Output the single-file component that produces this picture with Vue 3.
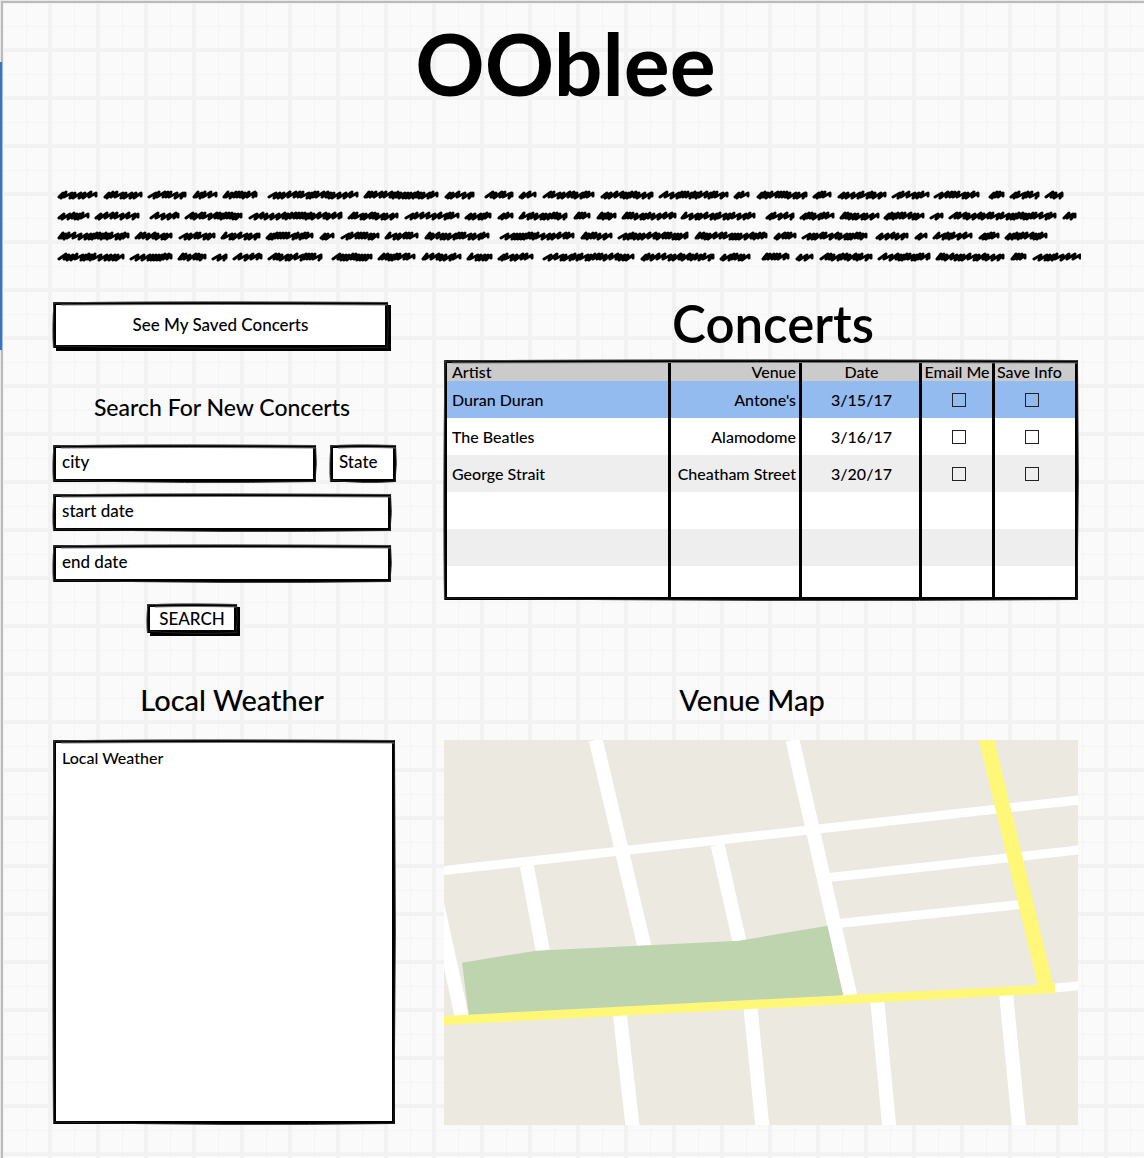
<script setup>
import { h, ref } from 'vue'

// Hand-drawn outline: thin bowed strokes laid over a plain border.
const Sketch = ({ width, height }) => {
  const x = 100 / width
  const y = 100 / height
  const line = (d, stroke, w) =>
    h('path', { d, stroke, 'stroke-width': w, fill: 'none', 'vector-effect': 'non-scaling-stroke' })
  return h('svg', { class: 'sketch', viewBox: '0 0 100 100', preserveAspectRatio: 'none', 'aria-hidden': 'true' }, [
    line(`M0 ${y} Q30 ${-y} 100 ${y / 2}`, '#444', 1),
    line(`M${8 * x} ${3 * y} Q50 ${2 * y} 100 ${3 * y}`, '#777', 1),
    line(`M0 ${100 - 2 * y} Q50 ${100 + 2 * y} 100 ${100 - y / 2}`, '#222', 1),
    line(`M${x} 0 Q${-x} 60 ${x / 2} 100`, '#444', 1),
    line(`M${100 - x / 2} 0 Q${100 + 1.4 * x} 50 ${100 - x} 100`, '#222', 1),
  ])
}
Sketch.props = ['width', 'height']

const scribbles = [
  { y: 8, words: '57-97 103-142 147-186 192-217 222-257 267-358 363-438 444-474 484-513 518-536 542-594 600-653 658-728 733-749 756-807 812-831 837-886 891-929 933-979 988-1004 1009-1039 1044-1063' },
  { y: 29, words: '57-89 94-139 149-179 184-242 248-342 347-398 404-459 464-491 497-513 518-567 573-590 596-616 621-676 680-755 765-794 799-834 839-879 883-924 929-943 948-1056 1062-1076' },
  { y: 49, words: '57-129 134-172 178-215 220-260 265-313 319-334 340-379 384-418 424-489 499-574 580-612 617-688 694-767 773-796 801-867 875-908 914-927 932-972 978-999 1004-1047' },
  { y: 70, words: '57-124 129-172 177-206 211-227 232-262 267-322 331-372 377-415 421-461 466-492 497-533 542-634 640-714 719-750 761-789 795-813 819-872 877-930 935-1004 1010-1026 1032-1081' },
]

let seed = 7
const random = () => (seed = (seed * 16807) % 2147483647) / 2147483647
function scribbleWord(word, y) {
  const [from, to] = word.split('-').map((n) => Number(n) - 57)
  let x = from + 2
  let d = `M${x} ${y + 2}`
  while (x < to - 7) {
    const pick = random()
    const step = pick < 0.5 ? 3 : pick < 0.7 ? 4 : 6
    const top = random() < 0.5 ? 3 : 2
    d += `L${x + step + 1} ${y - top}L${x + step - 1} ${y + 5 - top}`
    x += step
  }
  return d + `L${to - 1} ${y - 2}L${to - 1} ${y + 1}`
}
const scribblePath = scribbles.map((l) => l.words.split(' ').map((w) => scribbleWord(w, l.y)).join('')).join('')

const concerts = ref([
  { artist: 'Duran Duran', venue: "Antone's", date: '3/15/17', email: false, save: false },
  { artist: 'The Beatles', venue: 'Alamodome', date: '3/16/17', email: false, save: false },
  { artist: 'George Strait', venue: 'Cheatham Street', date: '3/20/17', email: false, save: false },
])
const city = ref('')
const state = ref('')
const startDate = ref('')
const endDate = ref('')

const streets = [
  'M-10 150L18 278', 'M83 126L99 211', 'M152 0L201 208', 'M274 105L296 202', 'M349 0L407 256',
  'M176 274L189 388', 'M307 268L319 388', 'M434 262L446 388', 'M563 254L576 388',
]
const lanes = ['M-2 131L637 60', 'M384 138L637 110', 'M392 184L576 165', 'M606 249L637 246']
</script>

<template>
  <div class="app">
    <div class="marker"></div>
    <div class="page">
      <header>
        <h1>OOblee</h1>
        <svg class="scribble" viewBox="0 0 1024 78" role="img" aria-label="Introduction text">
          <path :d="scribblePath" />
        </svg>
      </header>

      <main>
        <section class="finder">
          <div class="frame raised">
            <button class="saved" type="button">See My Saved Concerts</button>
            <Sketch :width="336" :height="46" />
          </div>
          <form @submit.prevent>
            <h2 class="small">Search For New Concerts</h2>
            <div class="place">
              <div class="frame city">
                <input v-model="city" type="text" placeholder="city" aria-label="city" />
                <Sketch :width="264" :height="37" />
              </div>
              <div class="frame state">
                <input v-model="state" type="text" placeholder="State" aria-label="State" />
                <Sketch :width="66" :height="37" />
              </div>
            </div>
            <div class="frame date">
              <input v-model="startDate" type="text" placeholder="start date" aria-label="start date" />
              <Sketch :width="338" :height="37" />
            </div>
            <div class="frame date">
              <input v-model="endDate" type="text" placeholder="end date" aria-label="end date" />
              <Sketch :width="338" :height="37" />
            </div>
            <div class="frame raised search">
              <button type="submit">SEARCH</button>
              <Sketch :width="90" :height="29" />
            </div>
          </form>
        </section>

        <section class="concerts">
          <h2 class="large">Concerts</h2>
          <div class="frame">
            <table>
              <colgroup>
                <col class="c-artist" /><col class="c-venue" /><col class="c-date" /><col class="c-email" /><col class="c-save" />
              </colgroup>
              <thead>
                <tr>
                  <th>Artist</th>
                  <th class="right">Venue</th>
                  <th class="center">Date</th>
                  <th class="center tight">Email Me</th>
                  <th class="tight">Save Info</th>
                </tr>
              </thead>
              <tbody>
                <tr v-for="(c, i) in concerts" :key="c.artist" :class="{ selected: i === 0 }">
                  <td>{{ c.artist }}</td>
                  <td class="right">{{ c.venue }}</td>
                  <td class="center">{{ c.date }}</td>
                  <td class="tick"><input v-model="c.email" type="checkbox" :aria-label="'Email me about ' + c.artist" /></td>
                  <td class="tick"><input v-model="c.save" type="checkbox" :aria-label="'Save info for ' + c.artist" /></td>
                </tr>
                <tr v-for="n in 3" :key="n" class="blank"><td v-for="k in 5" :key="k"></td></tr>
              </tbody>
            </table>
            <Sketch :width="633" :height="240" />
          </div>
        </section>

        <section class="weather">
          <h2>Local Weather</h2>
          <div class="frame">
            <textarea placeholder="Local Weather" aria-label="Local Weather"></textarea>
            <Sketch :width="342" :height="384" />
          </div>
        </section>

        <section class="venue">
          <h2>Venue Map</h2>
          <svg class="map" viewBox="0 0 635 386" role="img" aria-label="Venue map">
            <rect width="635" height="386" fill="#ece9e1" />
            <g fill="none" stroke="#fff">
              <path v-for="d in streets" :key="d" :d="d" stroke-width="14" />
              <path v-for="d in lanes" :key="d" :d="d" stroke-width="9" />
            </g>
            <path d="M18 223L92 211L296 201L384 186L400 256L25 277Z" fill="#bdd4ae" />
            <g fill="none" stroke="#fff777">
              <path d="M543 -2L604 252" stroke-width="15" />
              <path d="M-2 281L612 249" stroke-width="9" />
            </g>
          </svg>
        </section>
      </main>
    </div>
  </div>
</template>

<style>
body {
  margin: 0;
}
</style>

<style scoped>
.app {
  position: relative;
  padding: 1px 0 0 1px;
  background: #e8e8e8;
  color: #000;
  font-family: Lato, "Open Sans", sans-serif;
  font-size: 16px;
  font-weight: 500;
  line-height: 20px;
}
.marker {
  position: absolute;
  top: 62px;
  left: 0;
  width: 2px;
  height: 288px;
  background: #2a78c8;
}
.page {
  box-sizing: border-box;
  min-height: calc(100vh - 1px);
  padding: 20px 66px 31px 50px;
  border-top: 2px solid #bbb;
  border-left: 2px solid #bbb;
  background-color: #fafafa;
  background-image:
    linear-gradient(90deg, #f2f2f2 4px, transparent 4px),
    linear-gradient(#f2f2f2 4px, transparent 4px),
    linear-gradient(90deg, transparent 26px, #f4f4f4 26px, #f4f4f4 27px, transparent 27px),
    linear-gradient(transparent 26px, #f4f4f4 26px, #f4f4f4 27px, transparent 27px);
  background-size: 48px 48px;
  background-origin: border-box;
  background-position: -1px -1px;
}
h1,
h2 {
  margin: 0;
  text-align: center;
}
h1 {
  font-size: 86px;
  font-weight: 700;
  line-height: 80px;
}
h2 {
  font-size: 29px;
  font-weight: 500;
  line-height: 36px;
  margin-bottom: 22px;
}
h2.small {
  font-size: 23px;
  line-height: 28px;
  margin-bottom: 24px;
}
h2.large {
  font-size: 51px;
  font-weight: 600;
  line-height: 56px;
  margin-bottom: 8px;
  padding-left: 24px;
}
.scribble {
  display: block;
  box-sizing: border-box;
  width: calc(100% + 3px);
  margin-top: 84px;
  padding: 0 0 0 4px;
}
.scribble path {
  fill: none;
  stroke: #000;
  stroke-width: 3;
  stroke-linecap: round;
  stroke-linejoin: round;
}
main {
  display: grid;
  grid-template-columns: 342fr 634fr;
  column-gap: 49px;
  row-gap: 49px;
  margin-top: 31px;
}
.frame {
  position: relative;
  box-sizing: border-box;
  border: 3px solid #000;
  background: #fff;
}
.sketch {
  position: absolute;
  top: -3px;
  left: -3px;
  width: calc(100% + 6px);
  height: calc(100% + 6px);
  overflow: visible;
  pointer-events: none;
}
.raised {
  box-shadow: 3px 3px 0 #000;
}
button,
input,
textarea {
  display: block;
  box-sizing: border-box;
  width: 100%;
  margin: 0;
  border: 0;
  background: none;
  color: #000;
  font: inherit;
  font-size: 17px;
}
button {
  padding: 0;
}
input::placeholder,
textarea::placeholder {
  color: #000;
  opacity: 1;
}
.finder {
  padding: 6px 4px 0 0;
}
.finder > .raised {
  margin-right: 3px;
}
.saved {
  height: 40px;
}
form {
  display: flex;
  flex-direction: column;
  margin-top: 45px;
}
.place {
  display: flex;
  gap: 14px;
  margin: 0 -5px 12px 0;
}
.city {
  flex: 1;
}
.state {
  width: 66px;
}
.frame input[type="text"] {
  height: 31px;
  padding: 0 6px 4px;
}
.date {
  margin-bottom: 14px;
}
.search {
  width: 90px;
  margin: 8px 0 0 94px;
}
.search button {
  height: 23px;
}
table {
  width: 100%;
  border-collapse: separate;
  border-spacing: 0;
  table-layout: fixed;
}
.c-venue {
  width: 131px;
}
.c-date {
  width: 120px;
}
.c-email {
  width: 73px;
}
.c-save {
  width: 80px;
}
th,
td {
  box-sizing: border-box;
  height: 37px;
  padding: 0 3px 0 5px;
  border-right: 3px solid #000;
  font-weight: 500;
  text-align: left;
  white-space: nowrap;
}
th:last-child,
td:last-child {
  border-right: 0;
}
th {
  height: 18px;
  line-height: 18px;
  background: #cbcbcb;
}
.right {
  text-align: right;
}
.center {
  text-align: center;
}
.tight {
  padding: 0 2px;
}
.tick {
  padding: 0 0 0 30px;
}
.selected td {
  background: #94bbef;
}
tbody tr:nth-child(odd):not(.selected) td {
  background: #eee;
}
tbody tr:last-child td {
  height: 31px;
}
.blank td {
  padding: 0;
}
input[type="checkbox"] {
  appearance: none;
  width: 14px;
  height: 14px;
  border: 1px solid #222;
}
.weather h2 {
  padding-left: 16px;
}
.venue h2 {
  padding-right: 18px;
}
textarea {
  height: 378px;
  padding: 3px 6px;
  font-size: 16px;
  line-height: 24px;
  resize: none;
}
.map {
  display: block;
  width: 100%;
}
</style>
